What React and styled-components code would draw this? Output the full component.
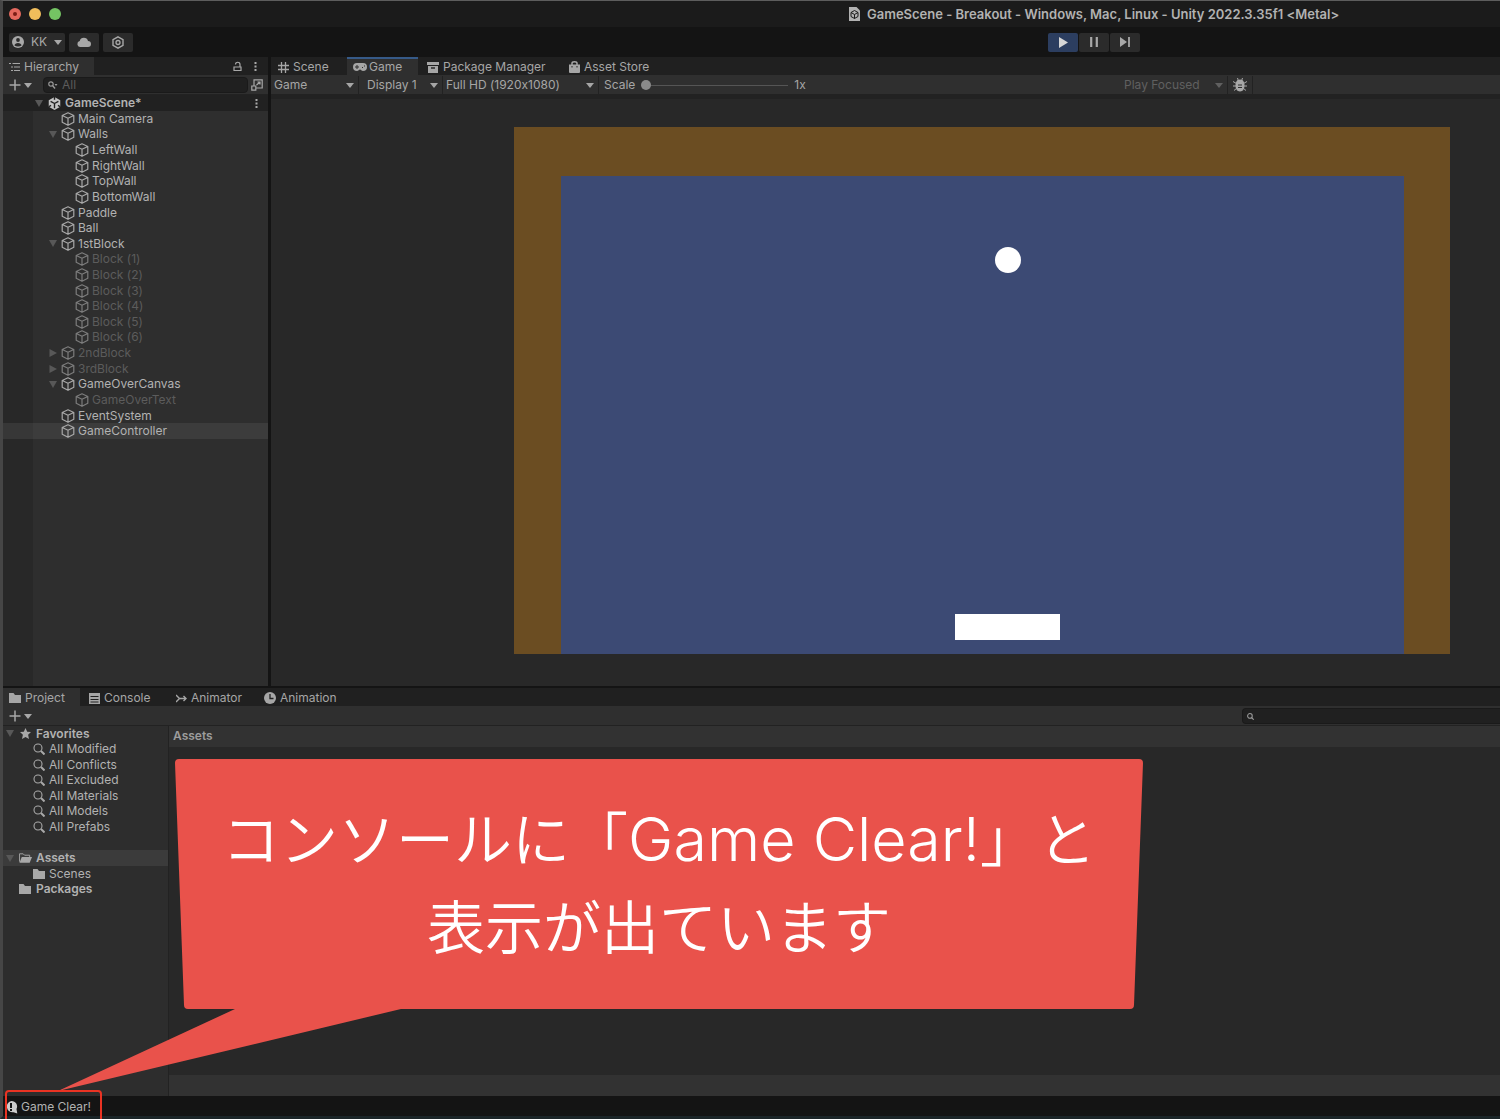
import React from 'react';
import styled, { createGlobalStyle } from 'styled-components';

const Global = createGlobalStyle`
  * { box-sizing: border-box; }
  body { margin: 0; background: #141414; overflow: hidden; }
  button, input, select { font: inherit; color: inherit; font-feature-settings: inherit; }
  ul { list-style: none; margin: 0; padding: 0; }
`;

const Window = styled.div`
  position: relative;
  display: flex;
  flex-direction: column;
  min-height: 100vh;
  border-top: 1px solid #5d5d5d;
  border-left: 3px solid #464646;
  border-bottom: 3px solid #1b2528;
  background: #141414;
  color: #b2b2b2;
  font: 12px/16px Inter, "Noto Sans CJK JP", sans-serif;
  font-feature-settings: "calt" 0;
`;

/* ---------- window chrome ---------- */
const TitleBar = styled.header`
  display: flex;
  align-items: center;
  height: 26px;
  padding-left: 6px;
  background: #1b1b1b;
`;
const Lights = styled.div`
  display: flex;
  gap: 8px;
  width: 840px;
`;
const Light = styled.i`
  display: grid;
  place-items: center;
  width: 12px;
  height: 12px;
  border-radius: 50%;
  background: ${(p) => p.$color};
  &::after {
    content: "";
    width: 4px;
    height: 4px;
    border-radius: 50%;
    background: ${(p) => p.$dot || 'transparent'};
  }
`;
const Title = styled.h1`
  display: flex;
  align-items: center;
  gap: 7px;
  margin: 0;
  font-size: 13px;
  font-weight: 600;
  white-space: nowrap;
`;
const MainBar = styled.div`
  display: flex;
  align-items: center;
  gap: 4px;
  height: 30px;
  padding-left: 6px;
`;
const BarButton = styled.button`
  display: flex;
  align-items: center;
  justify-content: center;
  gap: 7px;
  width: ${(p) => p.$width}px;
  height: 19px;
  padding: 0;
  border: 0;
  border-radius: 2px;
  background: ${(p) => (p.$active ? '#2c3e60' : '#2b2b2b')};
  color: ${(p) => (p.$active ? '#d6d6d6' : '#a8a8a8')};
`;
const PlayGroup = styled.div`
  display: flex;
  gap: 1px;
  margin-left: 911px;
`;

/* ---------- panels ---------- */
const Upper = styled.div`
  display: flex;
  gap: 3px;
  height: 629px;
`;
const Panel = styled.section`
  display: flex;
  flex-direction: column;
  flex: ${(p) => (p.$width ? 'none' : '1')};
  width: ${(p) => (p.$width ? `${p.$width}px` : 'auto')};
  min-width: 0;
  background: #282828;
`;
const Tabs = styled.div`
  display: flex;
  flex: none;
  height: 18px;
  background: #202020;
`;
const Tab = styled.button`
  display: flex;
  align-items: center;
  gap: ${(p) => p.$gap || 4}px;
  width: ${(p) => p.$width}px;
  padding: 0 0 0 ${(p) => p.$pad || 6}px;
  border: 0;
  border-top: 2px solid ${(p) => (p.$focus ? '#365a88' : 'transparent')};
  background: ${(p) => (p.$active ? '#2f2f2f' : 'transparent')};
  color: #a6a6a6;
  white-space: nowrap;
`;
const TabTools = styled.div`
  display: flex;
  align-items: center;
  gap: 12px;
  margin-left: auto;
  padding-right: 11px;
`;
const IconButton = styled.button`
  display: flex;
  align-items: center;
  gap: 3px;
  padding: 0;
  border: 0;
  background: none;
  color: #a8a8a8;
`;
const Tools = styled.div`
  display: flex;
  flex: none;
  align-items: center;
  height: 20px;
  padding-top: 1px;
  padding-left: ${(p) => p.$inset || 0}px;
  background: #2f2f2f;
  border-bottom: 1px solid #222;
`;
const Search = styled.label`
  display: flex;
  align-items: center;
  gap: 4px;
  flex: 1;
  min-width: 0;
  height: 16px;
  margin-left: ${(p) => p.$left}px;
  padding-left: 4px;
  border: 1px solid #1a1a1a;
  border-right-width: ${(p) => (p.$open ? 0 : 1)}px;
  border-radius: ${(p) => (p.$open ? '4px 0 0 4px' : '4px')};
  background: #202020;
  color: #999;
  input {
    flex: 1;
    min-width: 0;
    padding: 0;
    border: 0;
    outline: 0;
    background: none;
    line-height: 14px;
  }
  input::placeholder { color: #5c5c5c; }
`;
const Expand = styled(IconButton)`
  padding: 0 5px 0 3px;
`;

/* ---------- trees ---------- */
const Tree = styled.ul`
  display: grid;
  grid-auto-rows: 1fr;
  flex: none;
  height: ${(p) => p.$height}px;
`;
const Row = styled.li`
  display: flex;
  align-items: center;
  gap: ${(p) => p.$gap || 3}px;
  min-height: 0;
  padding-left: ${(p) => p.$indent}px;
  line-height: 14px;
  font-weight: ${(p) => (p.$bold ? 600 : 400)};
  color: ${(p) => (p.$dim ? '#5c5c5c' : '#b2b2b2')};
  background: ${(p) => (p.$selected ? 'rgba(255,255,255,0.07)' : 'transparent')};
  svg { flex: none; }
  & > svg:first-child { color: #585858; }
  & > svg:nth-child(2) { color: ${(p) => (p.$dim ? '#7c7c7c' : '#a8a8a8')}; }
`;
const SceneRow = styled.div`
  display: flex;
  align-items: center;
  gap: 4px;
  flex: none;
  height: 16px;
  padding: 0 10px 0 31px;
  background: #212121;
  font-weight: 600;
  & > svg:first-child { color: #585858; }
  & > svg:last-child { margin-left: auto; color: #a8a8a8; }
`;
const Outline = styled.div`
  flex: 1;
  background: linear-gradient(90deg, #282828 30px, #2e2e2e 30px);
`;

/* ---------- game view ---------- */
const Picker = styled.label`
  display: flex;
  align-items: center;
  width: ${(p) => p.$width}px;
  height: 100%;
  padding: 0 4px 0 ${(p) => p.$pad || 3}px;
  border-right: 1px solid #222;
  color: ${(p) => (p.$dim ? '#606060' : '#a6a6a6')};
  select {
    flex: 1;
    min-width: 0;
    padding: 0;
    border: 0;
    background: none;
    appearance: none;
    line-height: 16px;
  }
`;
const Scale = styled.label`
  display: flex;
  align-items: center;
  gap: 6px;
  width: 522px;
  padding-left: 5px;
  color: #a6a6a6;
  input {
    width: 147px;
    height: 10px;
    margin: 0;
    appearance: none;
    background: linear-gradient(#555, #555) center / 100% 1px no-repeat;
  }
  input::-webkit-slider-thumb {
    appearance: none;
    width: 10px;
    height: 10px;
    border-radius: 50%;
    background: #8a8a8a;
  }
`;
const Viewport = styled.div`
  flex: 1;
  padding: 28px 50px 0 243px;
  border-top: 4px solid #222;
`;
const Field = styled.div`
  position: relative;
  aspect-ratio: 936 / 527;
  padding: 49px 46px 0 47px;
  background: #6b4d22;
`;
const Court = styled.div`
  height: 100%;
  background: #3c4a74;
`;
const Ball = styled.div`
  position: absolute;
  left: 481px;
  top: 120px;
  width: 26px;
  height: 26px;
  border-radius: 50%;
  background: #fff;
`;
const Paddle = styled.div`
  position: absolute;
  left: 441px;
  bottom: 14px;
  width: 105px;
  height: 26px;
  background: #fff;
`;

/* ---------- project ---------- */
const Lower = styled(Panel)`
  margin-top: 2px;
`;
const Browser = styled.div`
  display: flex;
  flex: 1;
`;
const Folders = styled.div`
  width: 166px;
  border-right: 1px solid #222;
  background: #2d2d2d;
`;
const Content = styled.div`
  display: flex;
  flex-direction: column;
  justify-content: space-between;
  flex: 1;
`;
const Crumbs = styled.div`
  height: 21px;
  padding-left: 4px;
  background: #323232;
  line-height: 20px;
  font-weight: 600;
  color: #9c9c9c;
`;
const Status = styled.footer`
  display: flex;
  align-items: center;
  gap: 3px;
  height: 20px;
  padding: 2px 0 0 3px;
`;

/* ---------- annotation ---------- */
const Mark = styled.div`
  position: absolute;
  left: 2px;
  bottom: -8px;
  width: 97px;
  height: 34px;
  border: 2px solid #ea3323;
  border-radius: 4px;
`;
const Callout = styled.div`
  position: absolute;
  left: 55px;
  top: 757px;
  width: 1086px;
  height: 333px;
  & > svg { position: absolute; inset: 0; }
  p {
    position: relative;
    width: 968px;
    margin: 34px 0 0 117px;
    color: #fff;
    font: 58px/88px "Noto Sans CJK JP", sans-serif;
    font-weight: 350;
    text-align: center;
    white-space: nowrap;
  }
  span {
    font-family: Inter, sans-serif;
    font-size: 61px;
    font-weight: 300;
    line-height: 1;
  }
`;

/* ---------- icons ---------- */
const Svg = ({ w = 12, h, box, children }) => (
  <svg width={w} height={h || w} viewBox={box || `0 0 ${w} ${h || w}`} fill="none" stroke="currentColor" aria-hidden="true">
    {children}
  </svg>
);
const solid = { fill: 'currentColor', stroke: 'none' };
const Caret = ({ w = 8 }) => <Svg w={w} h={5} box="0 0 8 5"><path d="M0 0h8L4 5z" {...solid} /></Svg>;
const Down = () => <Svg w={10} h={9}><path d="M1 1h8L5 8z" {...solid} /></Svg>;
const Right = () => <Svg w={10} h={10}><path d="M1.500 1v8L9 5z" {...solid} /></Svg>;
const Blank = () => <Svg w={10} h={9} />;
const Cube = () => <Svg w={14}><path d="M7 .8l5.800 2.700v6.700L7 13.300 1.200 10.200V3.500zM1.200 3.500L7 6.300l5.800-2.800M7 6.300v7" strokeLinejoin="round" strokeWidth="1.200" /></Svg>;
const Unity = () => (
  <Svg w={13} box="0 0 14 14">
    <path d="M7 0l6.200 3.500v7L7 14 .8 10.500v-7z" fill="#c4c4c4" stroke="none" />
    <path d="M7 7v5M7 7L2.800 4.600M7 7l4.200-2.400M7 0v3M.8 10.500l2.500-1.500M13.200 10.500l-2.500-1.500" stroke="#212121" strokeWidth="1.500" />
  </Svg>
);
const Dots = () => <Svg w={3} h={11}><path d="M.5 1h2v2h-2zM.5 4.500h2v2h-2zM.5 8h2v2h-2z" {...solid} /></Svg>;
const Lock = () => <Svg w={9} h={11}><path d="M1 6h7v3.500H1zM2.500 3.500c0-3 4.500-3 4.500 0V6" strokeWidth="1.200" /></Svg>;
const Plus = () => <Svg w={12}><path d="M6 .5v11M.5 6h11" strokeWidth="1.500" /></Svg>;
const ListIcon = () => <Svg w={11} h={10}><path d="M0 1.500h2M3.500 1.500H11M2 5h2M5 5h6M2 8.500h2M5 8.500h6" strokeWidth="1.100" /></Svg>;
const Hash = () => <Svg w={11}><path d="M3.500 0v11M7.500 0v11M0 3.500h11M0 7.500h11" strokeWidth="1.300" /></Svg>;
const Pad = () => (
  <Svg w={14} h={8}>
    <path d="M4 0h6a4 4 0 010 8C8.500 8 8 6.500 7 6.500S5.500 8 4 8a4 4 0 010-8z" {...solid} />
    <path d="M2 4h4M4 2v4M9 4.500h1M11 3h1" stroke="#2f2f2f" />
  </Svg>
);
const Box = () => <Svg w={12} h={11}><path d="M0 0h12v3H0zM1 4h10v7H1z" {...solid} /><path d="M4 6h4" stroke="#202020" strokeWidth="1.400" /></Svg>;
const Bag = () => <Svg w={11} h={12}><path d="M0 3.500h11v7.500q0 1-1 1H1q-1 0-1-1z" {...solid} /><path d="M3 4V2.300c0-2 5-2 5 0V4" strokeWidth="1.500" /><path d="M3 5v1.500M8 5v1.500" stroke="#202020" /></Svg>;
const Mag = ({ w = 12 }) => <Svg w={w} box="0 0 12 12"><circle cx="5" cy="5" r="4" strokeWidth={w < 12 ? 1.8 : 1.1} /><path d="M8 8l3.500 3.500" strokeWidth="2" /></Svg>;
const MagDown = () => <Svg w={10} h={8}><circle cx="3" cy="3" r="2.200" strokeWidth="1.200" /><path d="M4.500 4.500L7 7.500" strokeWidth="1.400" /><path d="M6.500 3h3L8 5z" {...solid} /></Svg>;
const Pop = () => <Svg w={12}><path d="M3 7V.8h8.200V9H5M.8 7h4v4.200h-4zM5.500 6L9 3M6.500 3H9v2.500" strokeWidth="1.200" /></Svg>;
const Folder = () => <Svg w={12} h={10}><path d="M0 0h4.500l1.500 2H12v8H0z" {...solid} /></Svg>;
const FolderOpen = () => <Svg w={13} h={10} box="0 0 14 10"><path d="M.5 9V.5h4L6 2h5.500v2" /><path d="M3 4h11l-2.500 6H.5z" {...solid} /></Svg>;
const ConsoleIcon = () => <Svg w={11}><path d="M0 0h11v11H0z" {...solid} /><path d="M1.500 3.500h8M1.500 6.500h8M1.500 9h8" stroke="#202020" /></Svg>;
const AnimatorIcon = () => <Svg w={11} h={9}><path d="M0 1l3.500 3.500L0 8M3.500 4.500H10M7.500 2L10 4.500 7.500 7" strokeWidth="1.400" /></Svg>;
const Clock = () => <Svg w={12}><circle cx="6" cy="6" r="6" {...solid} /><path d="M6 2v4.500h3.500" stroke="#202020" strokeWidth="1.300" /></Svg>;
const Star = () => <Svg w={11}><path d="M5.500 0l1.700 3.700 3.800.4-2.900 2.700.9 4.200-3.500-2.100L2 11l.9-4.200L0 4.100l3.800-.4z" {...solid} /></Svg>;
const Person = () => <Svg w={12}><circle cx="6" cy="6" r="6" {...solid} /><circle cx="6" cy="4" r="1.900" fill="#2b2b2b" stroke="none" /><path d="M2.500 9.500c0-3.500 7-3.500 7 0-2 1.300-5 1.300-7 0z" fill="#2b2b2b" stroke="none" /></Svg>;
const Cloud = () => <Svg w={14} h={10}><path d="M3 10a3 3 0 01-.3-5.900A4.300 4.300 0 0111 4a3 3 0 010 6z" {...solid} /></Svg>;
const Hex = () => <Svg w={12} h={13}><path d="M6 .8l5 2.900v5.600l-5 2.900-5-2.900V3.700z" strokeWidth="1.400" /><circle cx="6" cy="6.500" r="2" strokeWidth="1.300" /></Svg>;
const Doc = () => (
  <Svg w={11} h={14}>
    <path d="M0 0h7.500L11 3.500V14H0z" {...solid} />
    <path d="M5.500 3.500L9 5.500v4l-3.500 2-3.500-2v-4zM5.500 7.500v4M5.500 7.500L2 5.500M5.500 7.500L9 5.500" stroke="#1b1b1b" />
  </Svg>
);
const Bug = () => (
  <Svg w={14}>
    <path d="M7 1.500c3.500 0 4.500 3 4.500 6S10 13.500 7 13.500s-4.500-3-4.500-6 1-6 4.500-6z" {...solid} />
    <path d="M4.500 0l1 3M9.500 0l-1 3M0 3.500l3.500 2M14 3.500l-3.500 2M0 8h3M14 8h-3M1 12.500L4 10M13 12.500L10 10" />
    <path d="M5 7h4M5 9.500h4" stroke="#2f2f2f" />
  </Svg>
);
const Play = () => <Svg w={9} h={11}><path d="M0 0l9 5.500L0 11z" {...solid} /></Svg>;
const Pause = () => <Svg w={8} h={10}><path d="M1.200 0v10M6.800 0v10" strokeWidth="2.200" /></Svg>;
const Step = () => <Svg w={10} h={10}><path d="M0 0l7 5-7 5z" {...solid} /><path d="M9 0v10" strokeWidth="1.800" /></Svg>;
const Alert = () => <Svg w={12} h={13}><path d="M5.500 0a5.500 5.500 0 015 8l.8 4.500-3.800-1.300A5.600 5.600 0 115.500 0z" fill="#ccc" stroke="none" /><path d="M5 2v5M5 8v2" stroke="#141414" strokeWidth="2" /></Svg>;

const objects = [
  ['Main Camera', 0], ['Walls', 0, 'open'], ['LeftWall', 1], ['RightWall', 1], ['TopWall', 1], ['BottomWall', 1],
  ['Paddle', 0], ['Ball', 0], ['1stBlock', 0, 'open'],
  ...[1, 2, 3, 4, 5, 6].map((n) => [`Block (${n})`, 1, '', true]),
  ['2ndBlock', 0, 'closed', true], ['3rdBlock', 0, 'closed', true],
  ['GameOverCanvas', 0, 'open'], ['GameOverText', 1, '', true], ['EventSystem', 0], ['GameController', 0],
];
const arrows = { open: Down, closed: Right };
const searches = ['All Modified', 'All Conflicts', 'All Excluded', 'All Materials', 'All Models', 'All Prefabs'];

export default function App() {
  return (
    <Window>
      <Global />
      <TitleBar>
        <Lights><Light $color="#e4695e" $dot="#7a1d16" /><Light $color="#f0bd5b" /><Light $color="#74c463" /></Lights>
        <Title><Doc />GameScene - Breakout - Windows, Mac, Linux - Unity 2022.3.35f1 &lt;Metal&gt;</Title>
      </TitleBar>
      <MainBar>
        <BarButton $width={56}><Person />KK<Caret /></BarButton>
        <BarButton $width={30} aria-label="Cloud"><Cloud /></BarButton>
        <BarButton $width={30} aria-label="Version control"><Hex /></BarButton>
        <PlayGroup>
          <BarButton $width={30} $active aria-label="Play"><Play /></BarButton>
          <BarButton $width={30} aria-label="Pause"><Pause /></BarButton>
          <BarButton $width={30} aria-label="Step"><Step /></BarButton>
        </PlayGroup>
      </MainBar>

      <Upper>
        <Panel $width={265}>
          <Tabs>
            <Tab $active $width={91}><ListIcon />Hierarchy</Tab>
            <TabTools>
              <IconButton aria-label="Lock"><Lock /></IconButton>
              <IconButton aria-label="Menu"><Dots /></IconButton>
            </TabTools>
          </Tabs>
          <Tools $inset={6}>
            <IconButton aria-label="Create"><Plus /><Caret /></IconButton>
            <Search $left={11}><MagDown /><input placeholder="All" aria-label="Search hierarchy" /></Search>
            <Expand aria-label="Open search"><Pop /></Expand>
          </Tools>
          <SceneRow><Down /><Unity />GameScene*<Dots /></SceneRow>
          <Outline>
            <Tree $height={328}>
              {objects.map(([name, depth, state, dim]) => {
                const Arrow = arrows[state] || Blank;
                return (
                  <Row key={name} $indent={45 + depth * 14} $dim={dim} $selected={name === 'GameController'}>
                    <Arrow /><Cube />{name}
                  </Row>
                );
              })}
            </Tree>
          </Outline>
        </Panel>

        <Panel>
          <Tabs>
            <Tab $width={76} $pad={7}><Hash />Scene</Tab>
            <Tab $width={71} $active $focus $gap={2}><Pad />Game</Tab>
            <Tab $width={144} $pad={9}><Box />Package Manager</Tab>
            <Tab $width={100} $pad={7}><Bag />Asset Store</Tab>
          </Tabs>
          <Tools>
            <Picker $width={88}><select aria-label="View"><option>Game</option></select><Caret /></Picker>
            <Picker $width={84} $pad={8}><select aria-label="Display"><option>Display 1</option></select><Caret /></Picker>
            <Picker $width={156}><select aria-label="Resolution"><option>Full HD (1920x1080)</option></select><Caret /></Picker>
            <Scale>Scale<input type="range" min="1" max="5" defaultValue="1" />1x</Scale>
            <Picker $width={107} $dim><select aria-label="Play mode"><option>Play Focused</option></select><Caret /></Picker>
            <Picker as="div" $width={25} $pad={5}><IconButton aria-label="Debug"><Bug /></IconButton></Picker>
          </Tools>
          <Viewport>
            <Field><Court /><Ball /><Paddle /></Field>
          </Viewport>
        </Panel>
      </Upper>

      <Lower>
        <Tabs>
          <Tab $active $width={77}><Folder />Project</Tab>
          <Tab $width={90} $pad={9}><ConsoleIcon />Console</Tab>
          <Tab $width={88}><AnimatorIcon />Animator</Tab>
          <Tab $width={90}><Clock />Animation</Tab>
        </Tabs>
        <Tools $inset={6}>
          <IconButton aria-label="Create"><Plus /><Caret /></IconButton>
          <Search $left={1210} $open><Mag w={7} /><input aria-label="Search project" /></Search>
        </Tools>
        <Browser>
          <Folders>
            <Tree $height={171}>
              <Row $indent={2} $bold $gap={5}><Down /><Star />Favorites</Row>
              {searches.map((s) => <Row key={s} $indent={16} $gap={4}><Blank /><Mag />{s}</Row>)}
              <Row aria-hidden="true" />
              <Row $indent={2} $bold $selected $gap={4}><Down /><FolderOpen />Assets</Row>
              <Row $indent={16} $gap={4}><Blank /><Folder />Scenes</Row>
              <Row $indent={1} $bold $gap={5}><Blank /><Folder />Packages</Row>
            </Tree>
          </Folders>
          <Content>
            <Crumbs>Assets</Crumbs>
            <Crumbs />
          </Content>
        </Browser>
      </Lower>
      <Status><Alert />Game Clear!</Status>

      <Callout>
        <svg width="1086" height="333" viewBox="0 0 1086 333" aria-hidden="true">
          <path d="M121 1H1081Q1085 1 1085 5L1076 247Q1076 251 1072 251H343L0 333L177 251H130Q126 251 126 247L117 5Q117 1 121 1Z" fill="#e9524b" />
        </svg>
        <p>コンソールに「<span>Game Clear!</span>」と<br />表示が出ています</p>
      </Callout>
      <Mark />
    </Window>
  );
}
